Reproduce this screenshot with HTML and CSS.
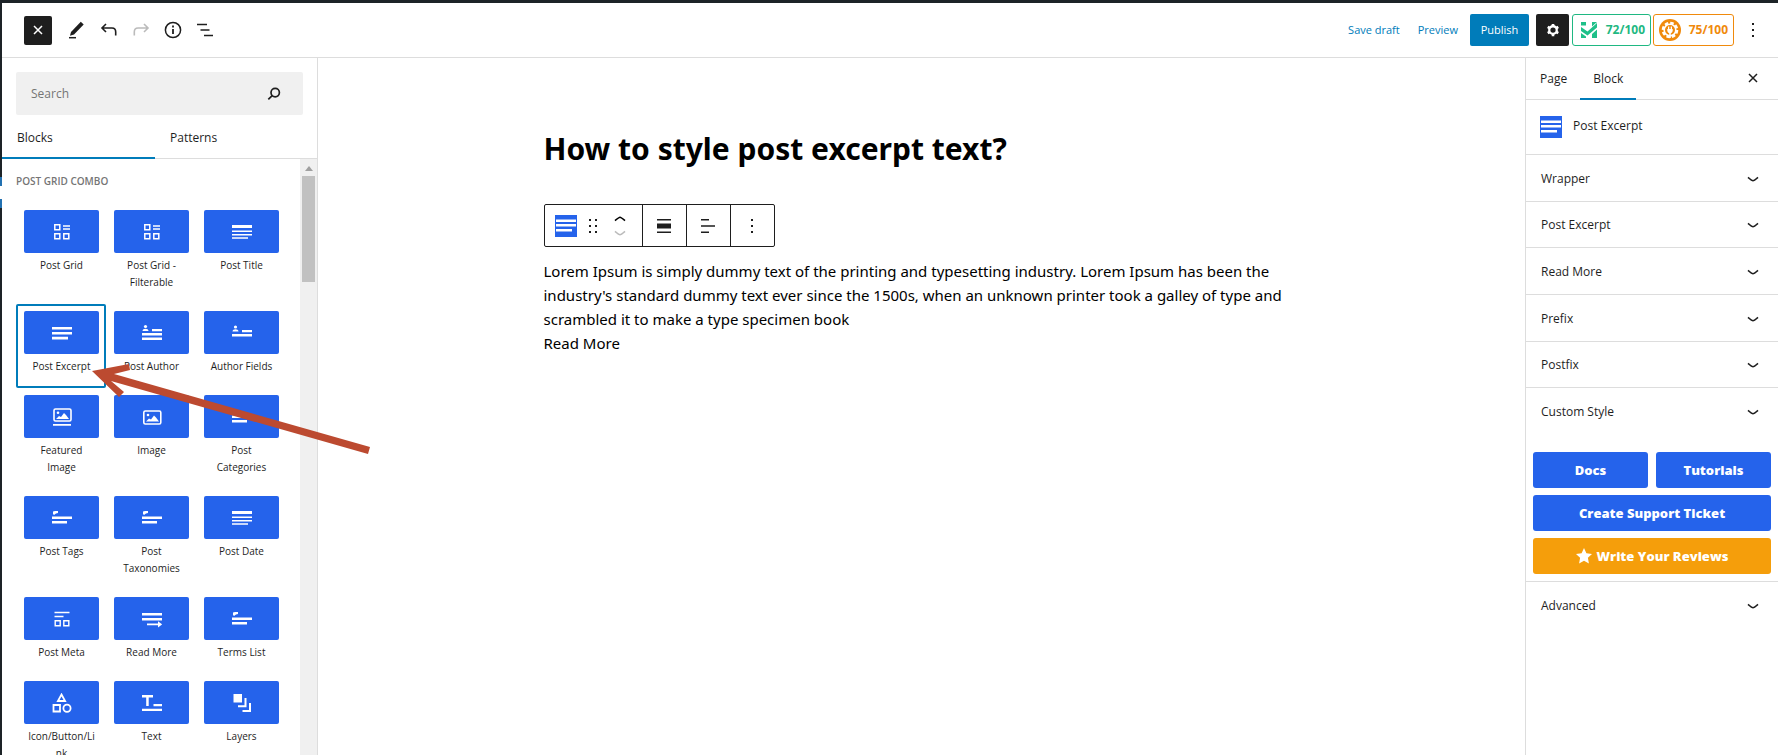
FILE: index.html
```html
<!DOCTYPE html>
<html lang="en">
<head>
<meta charset="utf-8">
<title>Edit page</title>
<link rel="stylesheet" href="styles.css">
</head>
<body>
<svg class="defs" aria-hidden="true">
  <symbol id="chev" viewBox="0 0 12 12"><path d="M1 4.300q4 3.400 5 3.400t5-3.400" fill="none" stroke="currentColor" stroke-width="1.600"/></symbol>
  <symbol id="close" viewBox="0 0 12 12"><path d="M2 2l8 8M10 2l-8 8" stroke="currentColor" stroke-width="1.500"/></symbol>
  <symbol id="excerpt" viewBox="0 0 22 22"><path fill="#2563eb" d="M0 0h22v22H0z"/><path fill="#fff" d="M1 4.500h20v2.500H1zM1 9h20v2.500H1zM1 14h16v2.500H1z"/></symbol>
  <symbol id="grid" viewBox="0 0 20 20"><g fill="none" stroke="currentColor" stroke-width="1.500"><path d="M2.800 2.800h5v5h-5zM2.800 11.800h5v5h-5zM11.800 11.800h5v5h-5zM11 4h7M11 7h7"/></g></symbol>
  <symbol id="title" viewBox="0 0 20 20"><path fill="currentColor" d="M0 3h20v3H0zM0 8.500h20v1.500H0zM0 12h20v1.500H0zM0 15.300h16v1.400H0z"/></symbol>
  <symbol id="lines" viewBox="0 0 20 20"><path fill="currentColor" d="M0 4h20v2.600H0zM0 9h20v2.600H0zM0 13.800h16v2.600H0z"/></symbol>
  <symbol id="author" viewBox="0 0 20 20"><circle cx="3.500" cy="3.500" r="1.600" fill="currentColor"/><path fill="currentColor" d="M.5 8c0-3 6-3 6 0zM10 6h10v2.300H10zM0 10h20v2.400H0zM0 14.500h20v2.400H0z"/></symbol>
  <symbol id="fields" viewBox="0 0 20 20"><circle cx="3.500" cy="4" r="1.600" fill="currentColor"/><path fill="currentColor" d="M.5 8.500c0-3 6-3 6 0zM10 7h10v2.300H10zM0 11h20v2.400H0z"/></symbol>
  <symbol id="featured" viewBox="0 0 20 20"><rect x="2" y="2" width="17" height="12" rx="1.500" fill="none" stroke="currentColor" stroke-width="1.600"/><circle cx="6" cy="5.700" r="1.300" fill="currentColor"/><path fill="currentColor" d="M4 12l3-3 2 1 3-4 2 2 3 4zM1 17h18v1.800H1z"/></symbol>
  <symbol id="image" viewBox="0 0 20 20"><rect x="1.800" y="4" width="17" height="13" rx="1.500" fill="none" stroke="currentColor" stroke-width="1.600"/><circle cx="6" cy="8" r="1.300" fill="currentColor"/><path fill="currentColor" d="M4 14.500l3-3 2 1 3-4 2 2 3 4z"/></symbol>
  <symbol id="tags" viewBox="0 0 20 20"><path fill="currentColor" d="M1 3.500L3 3h3v2L4 5.500 2 7 1 6zM0 8.500h20v2.500H0zM0 13h15v2.500H0z"/></symbol>
  <symbol id="meta" viewBox="0 0 20 20"><path fill="none" stroke="currentColor" stroke-width="1.400" d="M2.500 3.500h15M2.500 7.500h9M3.200 11.800h5v5h-5zM11.800 11.800h5v5h-5z"/></symbol>
  <symbol id="more" viewBox="0 0 20 20"><path fill="currentColor" d="M0 4h20v2.500H0zM0 9h20v2.500H0zM5 14.500h11v-2.300l4.200 3.200-4.200 3.200v-2.300H5z"/></symbol>
  <symbol id="shapes" viewBox="0 0 20 20"><path fill="none" stroke="currentColor" stroke-width="1.800" d="M9.500 1.500l3.600 6.500H5.900zM1.500 12h6.500v6.500H1.500z"/><circle cx="15" cy="15.200" r="3.600" fill="none" stroke="currentColor" stroke-width="1.800"/></symbol>
  <symbol id="text" viewBox="0 0 20 20"><path fill="currentColor" d="M0 2h11v2.500H6.700V13H4.200V4.500H0zM11.500 11H20v2.300h-8.500zM0 15.700h20V18H0z"/></symbol>
  <symbol id="layers" viewBox="0 0 20 20"><path fill="currentColor" d="M1.500 1h8.500v8.500H1.500z"/><path fill="none" stroke="currentColor" stroke-width="2" d="M13.500 5v8.300H6M18 10v8H10.500"/></symbol>
</svg>
<div class="app">
  <header class="topbar">
    <div class="tools">
      <button class="toggle" aria-label="Close inserter"><svg class="ic12"><use href="#close"/></svg></button>
      <button class="tool" aria-label="Tools"><svg viewBox="0 0 20 20"><path d="M4 12L13.800 1.700l2.900 2.700L7 14.600l-4 1.200z" fill="#1e1e1e"/><path d="M2 17.700h7" stroke="#1e1e1e" stroke-width="1.500"/></svg></button>
      <button class="tool" aria-label="Undo"><svg viewBox="0 0 20 20"><path d="M7 4L3 8l4 4M3 8h10q3.700 0 3.700 4v3.500" fill="none" stroke="#1e1e1e" stroke-width="1.600"/></svg></button>
      <button class="tool" aria-label="Redo" disabled><svg viewBox="0 0 20 20"><path d="M13 4l4 4-4 4M17 8H7q-3.700 0-3.700 4v3.500" fill="none" stroke="#bbb" stroke-width="1.600"/></svg></button>
      <button class="tool" aria-label="Details"><svg viewBox="0 0 20 20"><circle cx="10" cy="10" r="7.600" fill="none" stroke="#1e1e1e" stroke-width="1.500"/><path d="M10 9v5M10 5.500v2" stroke="#1e1e1e" stroke-width="1.800"/></svg></button>
      <button class="tool" aria-label="List view"><svg viewBox="0 0 20 20"><path d="M2 4.500h10M5.500 10h9M9 15.500h9" stroke="#1e1e1e" stroke-width="1.700"/></svg></button>
    </div>
    <div class="actions">
      <a class="link" href="#">Save draft</a>
      <a class="link" href="#">Preview</a>
      <button class="publish">Publish</button>
      <button class="gear" aria-label="Settings"><svg viewBox="0 0 16 16"><circle cx="8" cy="8" r="4.300" fill="none" stroke="#fff" stroke-width="2.600"/><path d="M8 1v3M8 12v3M2 4.500l2.500 1.500M11.500 10l2.500 1.500M2 11.500l2.500-1.500M11.500 6l2.500-1.500" stroke="#fff" stroke-width="3"/></svg></button>
      <button class="score green"><svg viewBox="0 0 16 16"><path fill="#1fc089" d="M0 0h5v3.500H0zM0 5l6.500 4.500L16 1v4.500L6.500 13.500 0 9zM11 0h5L11 4.500zM0 11l5 3.500V16H0zM16 7.500V16h-5v-4z"/></svg>72/100</button>
      <button class="score orange"><svg viewBox="0 0 22 22"><circle cx="11" cy="11" r="11" fill="#f08a0c"/><circle cx="11" cy="11" r="7" fill="none" stroke="#fff" stroke-width="2.600" stroke-dasharray="3.500 2"/><circle cx="11" cy="11" r="5.800" fill="none" stroke="#fff" stroke-width="1.600"/><path d="M8.300 10h5.400v2q-.5 2-1.900 2.200V19h-1.600v-4.800q-1.400-.2-1.900-2.200zM9 7.500h1.300V10H9zM11.700 7.500H13V10h-1.300z" fill="#fff"/></svg>75/100</button>
      <button class="dots" aria-label="Options"><svg viewBox="0 0 4 16"><path d="M1 1h2v2H1zM1 7h2v2H1zM1 13h2v2H1z" fill="#1e1e1e"/></svg></button>
    </div>
  </header>
  <div class="body">
    <aside class="inserter">
      <label class="search"><input type="text" placeholder="Search" aria-label="Search"><svg viewBox="0 0 14 14"><circle cx="8.200" cy="5.600" r="4.200" fill="none" stroke="#1e1e1e" stroke-width="1.700"/><path d="M5.200 8.700L1.300 12.300" stroke="#1e1e1e" stroke-width="1.700"/></svg></label>
      <div class="tabs"><button class="tab on">Blocks</button><button class="tab">Patterns</button></div>
      <div class="list">
        <div class="blocks">
          <h2>POST GRID COMBO</h2>
          <div class="grid">
            <button class="item"><span class="tile"><svg><use href="#grid"/></svg></span><span class="name">Post Grid</span></button>
            <button class="item"><span class="tile"><svg><use href="#grid"/></svg></span><span class="name">Post Grid - Filterable</span></button>
            <button class="item"><span class="tile"><svg><use href="#title"/></svg></span><span class="name">Post Title</span></button>
            <button class="item chosen"><span class="tile"><svg><use href="#lines"/></svg></span><span class="name">Post Excerpt</span></button>
            <button class="item"><span class="tile"><svg><use href="#author"/></svg></span><span class="name">Post Author</span></button>
            <button class="item"><span class="tile"><svg><use href="#fields"/></svg></span><span class="name">Author Fields</span></button>
            <button class="item"><span class="tile"><svg><use href="#featured"/></svg></span><span class="name">Featured Image</span></button>
            <button class="item"><span class="tile"><svg><use href="#image"/></svg></span><span class="name">Image</span></button>
            <button class="item"><span class="tile"><svg><use href="#tags"/></svg></span><span class="name">Post Categories</span></button>
            <button class="item"><span class="tile"><svg><use href="#tags"/></svg></span><span class="name">Post Tags</span></button>
            <button class="item"><span class="tile"><svg><use href="#tags"/></svg></span><span class="name">Post Taxonomies</span></button>
            <button class="item"><span class="tile"><svg><use href="#title"/></svg></span><span class="name">Post Date</span></button>
            <button class="item"><span class="tile"><svg><use href="#meta"/></svg></span><span class="name">Post Meta</span></button>
            <button class="item"><span class="tile"><svg><use href="#more"/></svg></span><span class="name">Read More</span></button>
            <button class="item"><span class="tile"><svg><use href="#tags"/></svg></span><span class="name">Terms List</span></button>
            <button class="item"><span class="tile"><svg><use href="#shapes"/></svg></span><span class="name">Icon/Button/Link</span></button>
            <button class="item"><span class="tile"><svg><use href="#text"/></svg></span><span class="name">Text</span></button>
            <button class="item"><span class="tile"><svg><use href="#layers"/></svg></span><span class="name">Layers</span></button>
          </div>
        </div>
        <div class="scroll"><svg viewBox="0 0 8 5"><path d="M4 0l4 5H0z" fill="#a0a0a0"/></svg><div class="thumb"></div></div>
      </div>
    </aside>
    <main class="canvas">
      <div class="page">
        <h1>How to style post excerpt text?</h1>
        <div class="blockbar">
          <div class="seg first">
            <button aria-label="Post Excerpt"><svg class="ic22"><use href="#excerpt"/></svg></button>
            <button aria-label="Drag"><svg class="drag" viewBox="0 0 8 14"><path d="M0 0h2v2H0zM6 0h2v2H6zM0 6h2v2H0zM6 6h2v2H6zM0 12h2v2H0zM6 12h2v2H6z" fill="#1e1e1e"/></svg></button>
            <span class="movers"><button aria-label="Move up"><svg class="ic12 flip"><use href="#chev"/></svg></button><button class="faded" aria-label="Move down" disabled><svg class="ic12"><use href="#chev"/></svg></button></span>
          </div>
          <button class="seg" aria-label="Align"><svg viewBox="0 0 14 14"><path d="M0 0h14v1.500H0zM0 4.500h14v5H0zM0 12.500h14V14H0z" fill="#1e1e1e"/></svg></button>
          <button class="seg" aria-label="Text align"><svg viewBox="0 0 14 14"><path d="M0 0h8v1.500H0zM0 6.300h14v1.500H0zM0 12.500h8V14H0z" fill="#1e1e1e"/></svg></button>
          <button class="seg" aria-label="More"><svg viewBox="0 0 14 14"><path d="M6 0h2v2H6zM6 6h2v2H6zM6 12h2v2H6z" fill="#1e1e1e"/></svg></button>
        </div>
        <p>Lorem Ipsum is simply dummy text of the printing and typesetting industry. Lorem Ipsum has been the industry's standard dummy text ever since the 1500s, when an unknown printer took a galley of type and scrambled it to make a type specimen book</p>
        <p>Read More</p>
      </div>
    </main>
    <aside class="settings">
      <div class="stabs"><button>Page</button><button class="on">Block</button><button class="x" aria-label="Close settings"><svg class="ic12"><use href="#close"/></svg></button></div>
      <div class="card"><svg class="ic22"><use href="#excerpt"/></svg><span>Post Excerpt</span></div>
      <div class="rows">
        <button class="row">Wrapper<svg class="ic12"><use href="#chev"/></svg></button>
        <button class="row">Post Excerpt<svg class="ic12"><use href="#chev"/></svg></button>
        <button class="row">Read More<svg class="ic12"><use href="#chev"/></svg></button>
        <button class="row">Prefix<svg class="ic12"><use href="#chev"/></svg></button>
        <button class="row">Postfix<svg class="ic12"><use href="#chev"/></svg></button>
        <button class="row">Custom Style<svg class="ic12"><use href="#chev"/></svg></button>
      </div>
      <div class="help">
        <a href="#">Docs</a><a href="#">Tutorials</a>
        <a class="wide" href="#">Create Support Ticket</a>
        <a class="wide amber" href="#"><svg viewBox="0 0 16 16"><path d="M8 0l2.400 5.200 5.600.7-4.100 3.900 1 5.700L8 12.700l-4.900 2.800 1-5.700L0 5.900l5.600-.7z" fill="#fff"/></svg>Write Your Reviews</a>
      </div>
      <button class="row">Advanced<svg class="ic12"><use href="#chev"/></svg></button>
    </aside>
  </div>
  <div class="edge"></div>
  <svg class="arrow" viewBox="0 0 280 92" aria-hidden="true"><path d="M0 9l37-7 1 6-16 4 256 73-2 7L19 19l13 11-5 5z" fill="#bc4a30"/></svg>
</div>
</body>
</html>
```

FILE: styles.css
```css
* { box-sizing: border-box; }
body { margin: 0; font: 12px/16px "Open Sans", "Noto Sans", sans-serif; color: #1e1e1e; background: #fff; }
button, input { font: inherit; color: inherit; background: none; border: 0; padding: 0; margin: 0; }
a { text-decoration: none; }
svg { display: block; flex: none; }
.defs { position: absolute; width: 0; height: 0; }
.ic12 { width: 12px; height: 12px; }
.ic22 { width: 22px; height: 22px; }
.app { position: relative; display: flex; flex-direction: column; height: 100vh; overflow: hidden; padding: 3px 0 0 2px; background: #1d2327; }
.topbar { display: flex; justify-content: space-between; align-items: center; height: 55px; flex: none; background: #fff; border-bottom: 1px solid #ddd; padding: 0 15px 0 22px; }
.tools, .actions { display: flex; align-items: center; }
.tools { gap: 12px; }
.toggle { display: flex; align-items: center; justify-content: center; width: 28px; height: 29px; background: #1e1e1e; border-radius: 2px; color: #fff; }
.tool svg { width: 20px; height: 20px; }
.tool { width: 20px; }
.tools .toggle { margin-right: 3px; }
.link { color: #007cba; font-size: 11px; margin-right: 18px; }
.link + .link { margin-right: 12px; }
.publish { background: #007cba; color: #fff; font-size: 11px; border-radius: 2px; height: 32px; width: 59px; margin-right: 7px; }
.gear { display: flex; align-items: center; justify-content: center; width: 33px; height: 32px; background: #1e1e1e; border-radius: 2px; margin-right: 3px; }
.gear svg { width: 14px; height: 14px; }
.score { display: flex; align-items: center; justify-content: space-between; width: 79px; height: 32px; border: 1px solid; border-radius: 3px; padding: 0 5px 0 8px; font-weight: 700; margin-right: 2px; }
.score svg { width: 16px; height: 16px; }
.green { color: #1fb882; }
.orange { width: 81px; color: #f08a0c; padding-left: 5px; }
.orange svg { width: 22px; height: 22px; }
.dots { padding: 0 8px; margin-left: 7px; }
.dots svg { width: 4px; height: 16px; }
.body { display: flex; flex: 1; min-height: 0; background: #fff; }
.inserter { display: flex; flex-direction: column; width: 316px; flex: none; border-right: 1px solid #ddd; }
.search { display: flex; align-items: center; height: 43px; flex: none; margin: 14px 14px 0; padding: 1px 22px 0 15px; background: #f0f0f0; border-radius: 2px; }
.search input { flex: 1; min-width: 0; outline: 0; }
.search input::placeholder { color: #757575; opacity: 1; }
.search svg { width: 14px; height: 14px; }
.tabs { display: flex; height: 44px; flex: none; border-bottom: 1px solid #ddd; }
.tab { width: 153px; text-align: left; padding: 3px 0 0 15px; margin-bottom: -1px; border-bottom: 2px solid transparent; }
.tab.on { border-color: #007cba; }
.list { display: flex; flex: 1; min-height: 0; }
.blocks { flex: 1; min-width: 0; padding: 14px 14px 0; overflow: hidden; }
.blocks h2 { margin: 0 0 14px; font-size: 10px; line-height: 16px; font-weight: 600; color: #757575; }
.grid { display: grid; grid-template-columns: repeat(3, 1fr); }
.item { display: flex; flex-direction: column; align-items: stretch; justify-content: flex-start; min-width: 0; padding: 7px 7px 13px 8px; font-size: 10px; line-height: 17px; text-align: center; border-radius: 2px; }
.name { padding: 0 2px; overflow-wrap: anywhere; }
.chosen { box-shadow: inset 0 0 0 2px #007cba; }
.tile { display: flex; align-items: center; justify-content: center; height: 43px; margin-bottom: 4px; border-radius: 2px; background: #2563eb; color: #fff; }
.tile svg { width: 20px; height: 20px; }
.scroll { width: 17px; flex: none; background: #f0f0f0; padding: 7px 2px 0; }
.scroll svg { width: 8px; height: 5px; margin: 0 auto 5px; }
.thumb { height: 106px; background: #c1c1c1; }
.canvas { flex: 1; min-width: 0; }
.page { width: 756px; max-width: 100%; margin: 0 auto; padding-top: 66px; color: #000; font-family: "Noto Sans", sans-serif; font-size: 15px; line-height: 24px; }
.page h1 { margin: 0; font-size: 30px; line-height: 50px; font-weight: 700; }
.page p { margin: 0; }
.blockbar { display: flex; width: max-content; height: 43px; margin: 30px 0 12px; border: 1px solid #1e1e1e; border-radius: 2px; }
.seg { display: flex; align-items: center; justify-content: center; width: 44px; border-left: 1px solid #1e1e1e; }
.seg > svg { width: 14px; height: 14px; }
.seg.first { width: 97px; border: 0; gap: 12px; justify-content: flex-start; padding-left: 10px; }
.drag { width: 8px; height: 14px; }
.movers { display: flex; flex-direction: column; gap: 2px; margin-left: 5px; }
.flip { transform: rotate(180deg); }
.faded { color: #bbb; }
.settings { width: 253px; flex: none; border-left: 1px solid #ddd; }
.stabs { display: flex; height: 42px; border-bottom: 1px solid #ddd; padding-right: 19px; }
.stabs button { padding: 2px 13px 0 14px; margin-bottom: -1px; border-bottom: 2px solid transparent; }
.stabs .on { border-color: #007cba; padding-left: 13px; }
.stabs .x { margin-left: auto; padding: 0; }
.card { display: flex; height: 54px; padding: 16px 14px; gap: 11px; }
.card span { padding-top: 2px; }
.rows { display: grid; grid-auto-rows: 1fr; height: 280px; }
.row { display: flex; align-items: center; justify-content: space-between; width: 100%; min-height: 46px; padding: 2px 19px 0 15px; border-top: 1px solid #ddd; }
.help { display: grid; grid-template-columns: 1fr 1fr; gap: 7px 8px; padding: 18px 7px 7px; }
.help a { display: flex; align-items: center; justify-content: center; gap: 5px; height: 36px; border-radius: 3px; background: #2563eb; color: #fff; font-size: 13px; font-weight: 800; }
.help .wide { grid-column: span 2; }
.help .amber { background: #f59e0b; }
.help svg { width: 16px; height: 16px; }
.edge { position: absolute; left: 0; top: 177px; width: 2px; height: 31px; background: linear-gradient(#2271b1 9px, #fff 9px 22px, #2271b1 22px); }
.arrow { position: absolute; left: 92px; top: 362px; width: 280px; height: 92px; pointer-events: none; }
```
